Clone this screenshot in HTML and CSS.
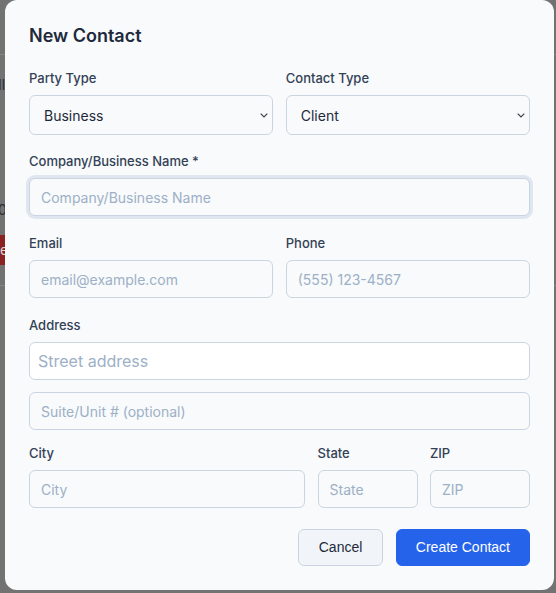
FILE: index.html
```html
<!DOCTYPE html>
<html lang="en">
<head>
<meta charset="utf-8">
<title>New Contact</title>
<link rel="stylesheet" href="styles.css">
</head>
<body>
<div class="page">
  <div class="page-header"></div>
  <div class="page-text page-text-1">Il</div>
  <div class="page-text page-text-2">03</div>
  <div class="page-badge">e</div>
  <div class="page-rule"></div>
</div>

<div class="modal">
  <h2 class="modal-title">New Contact</h2>

  <div class="grid-2 group group-first">
    <div class="field">
      <label class="label">Party Type</label>
      <div class="select-wrap">
        <select class="select">
          <option>Business</option>
          <option>Individual</option>
        </select>
        <svg class="chevron" width="8" height="5" viewBox="0 0 8 5"><path d="M0.7 0.7 L4 4 L7.3 0.7" fill="none" stroke="#3f3f46" stroke-width="1.2"/></svg>
      </div>
    </div>
    <div class="field">
      <label class="label">Contact Type</label>
      <div class="select-wrap">
        <select class="select">
          <option>Client</option>
          <option>Vendor</option>
        </select>
        <svg class="chevron" width="8" height="5" viewBox="0 0 8 5"><path d="M0.7 0.7 L4 4 L7.3 0.7" fill="none" stroke="#3f3f46" stroke-width="1.2"/></svg>
      </div>
    </div>
  </div>

  <div class="field group">
    <label class="label">Company/Business Name *</label>
    <input class="input input-focus" type="text" placeholder="Company/Business Name">
  </div>

  <div class="grid-2 group">
    <div class="field">
      <label class="label">Email</label>
      <input class="input" type="text" placeholder="email@example.com">
    </div>
    <div class="field">
      <label class="label">Phone</label>
      <input class="input" type="text" placeholder="(555) 123-4567">
    </div>
  </div>

  <div class="field group group-address">
    <label class="label">Address</label>
    <input class="input input-street" type="text" placeholder="Street address">
    <input class="input input-suite" type="text" placeholder="Suite/Unit # (optional)">
  </div>

  <div class="grid-city group-city">
    <div class="field">
      <label class="label">City</label>
      <input class="input" type="text" placeholder="City">
    </div>
    <div class="field">
      <label class="label">State</label>
      <input class="input" type="text" placeholder="State">
    </div>
    <div class="field">
      <label class="label">ZIP</label>
      <input class="input" type="text" placeholder="ZIP">
    </div>
  </div>

  <div class="actions">
    <button class="btn btn-cancel" type="button">Cancel</button>
    <button class="btn btn-primary" type="button">Create Contact</button>
  </div>
</div>
</body>
</html>
```

FILE: styles.css
```css
html, body {
  margin: 0;
  padding: 0;
  height: 100%;
}

body {
  background: #727272;
  font-family: Inter, "Noto Sans", sans-serif;
  overflow: hidden;
}

.page {
  display: flex;
  flex-direction: column;
}

.page-header {
  height: 54px;
  border-bottom: 1px solid #858585;
}

.page-text {
  color: #2e2e2e;
  font-size: 14px;
  line-height: 20px;
  margin-left: -2px;
}

.page-text-1 {
  margin-top: 20px;
}

.page-text-2 {
  margin-top: 105px;
}

.page-badge {
  margin-top: 15px;
  height: 30px;
  width: 40px;
  background: #8a2222;
  color: #d9d9d9;
  font-size: 14px;
  line-height: 30px;
}

.page-rule {
  margin-top: 20px;
  border-top: 1px solid #858585;
}

.modal {
  position: fixed;
  left: 5px;
  top: 0;
  width: 549px;
  height: 590px;
  box-sizing: border-box;
  background: #f8fafc;
  border-radius: 12px;
  padding: 22px 24px 23px;
  display: flex;
  flex-direction: column;
}

.modal-title {
  margin: 0 0 18px;
  font-size: 18px;
  line-height: 28px;
  font-weight: 600;
  color: #1e293b;
}

.group {
  margin-bottom: 17px;
}

.group-first {
  margin-bottom: 16px;
}

.group-address {
  margin-bottom: 13px;
}

.group-city {
  margin-bottom: 21px;
}

.grid-2 {
  display: grid;
  grid-template-columns: 1fr 1fr;
  column-gap: 12.5px;
}

.grid-city {
  display: grid;
  grid-template-columns: 1fr 100px 100px;
  column-gap: 12.5px;
}

.field {
  display: flex;
  flex-direction: column;
  min-width: 0;
}

.label {
  font-size: 13px;
  line-height: 20px;
  font-weight: 500;
  color: #334155;
  margin-bottom: 7px;
}

.select-wrap {
  position: relative;
}

.select {
  appearance: none;
  -webkit-appearance: none;
  width: 100%;
  height: 40px;
  box-sizing: border-box;
  border: 1px solid #cbd5e1;
  border-radius: 6px;
  background: #f8fafc;
  padding: 0 14px;
  font-family: Inter, "Noto Sans", sans-serif;
  font-size: 14px;
  color: #1e293b;
  outline: none;
}

.chevron {
  position: absolute;
  right: 5px;
  top: 18px;
  pointer-events: none;
}

.input {
  width: 100%;
  height: 38px;
  box-sizing: border-box;
  border: 1px solid #cbd5e1;
  border-radius: 6px;
  background: #f8fafc;
  padding: 0 11px;
  font-family: Inter, "Noto Sans", sans-serif;
  font-size: 14px;
  color: #1e293b;
  outline: none;
  margin: 0;
}

.input::placeholder {
  color: #9db0c6;
}

.input-focus {
  border-color: #c9d4e2;
  box-shadow: 0 0 0 3px #dfe6ef;
}

.input-street {
  background: #ffffff;
  padding: 0 8px;
  font-size: 16px;
}

.input-suite {
  margin-top: 12px;
}

.actions {
  display: flex;
  justify-content: flex-end;
  gap: 12.5px;
}

.btn {
  font-family: "Liberation Sans", Arial, sans-serif;
  font-size: 14px;
  line-height: 19px;
  padding: 8px 19px;
  border-radius: 6px;
  border: 1px solid transparent;
  cursor: pointer;
}

.btn-cancel {
  background: #f1f5f9;
  border-color: #cbd5e1;
  color: #1e293b;
  padding: 8px 20px;
}

.btn-primary {
  background: #2563eb;
  border-color: #2563eb;
  color: #ffffff;
}
```
